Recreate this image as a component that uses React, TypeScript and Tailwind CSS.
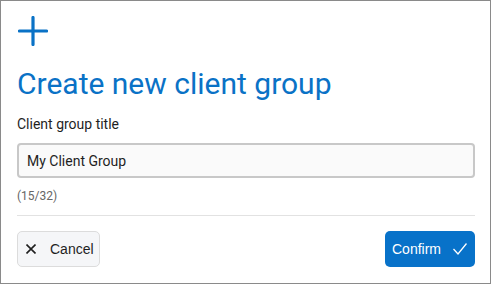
import { useState } from "react";

const App = () => {
  const [title, setTitle] = useState<string>("My Client Group");

  return (
    <div className="w-[491px] h-[284px] border border-[#8a8a8a] bg-white font-['Roboto',sans-serif] text-[#222]">
      <div className="flex flex-col px-4 pt-[15px]">
        <svg width="30" height="30" viewBox="0 0 30 30" className="ml-[1px]">
          <path d="M15 1.5v27M1.5 15h27" stroke="#0a72c6" strokeWidth="3.2" strokeLinecap="round" />
        </svg>
        <h1 className="mt-[20px] text-[30px] leading-[36px] text-[#0a72c6]">Create new client group</h1>
        <label className="mt-[12px] text-[14px] leading-[20px] text-[#1f1f1f]">Client group title</label>
        <input
          value={title}
          maxLength={32}
          onChange={(e) => setTitle(e.target.value)}
          className="mt-[9px] h-[35px] w-[458px] rounded-[4px] border-2 border-[#c8c8c8] bg-[#fafafa] px-[8px] text-[14px] text-[#1f1f1f] outline-none"
        />
        <span className="mt-[10px] text-[12px] leading-[16px] text-[#666]">({title.length}/32)</span>
        <div className="mt-[11px] w-[458px] border-t border-[#e2e2e2]" />
        <div className="mt-[15px] flex w-[458px] items-center justify-between font-['Liberation_Sans',Arial,sans-serif]">
          <button className="flex h-[36px] items-center gap-[14px] rounded-[5px] border border-[#dcdcdc] bg-[#f5f6f8] pl-[8px] pr-[5px] text-[14px] text-[#1f1f1f]">
            <svg width="10" height="10" viewBox="0 0 10 10">
              <path d="M0.5 0.5l9 9M9.5 0.5l-9 9" stroke="#1f1f1f" strokeWidth="1.6" />
            </svg>
            Cancel
          </button>
          <button className="flex h-[36px] items-center gap-[12px] rounded-[5px] bg-[#0872c9] pl-[7px] pr-[8px] text-[14px] text-white">
            Confirm
            <svg width="14" height="12" viewBox="0 0 14 12">
              <path d="M0.5 6l4.5 5L13.5 0.5" fill="none" stroke="white" strokeWidth="1.3" />
            </svg>
          </button>
        </div>
      </div>
    </div>
  );
};

export default App;
